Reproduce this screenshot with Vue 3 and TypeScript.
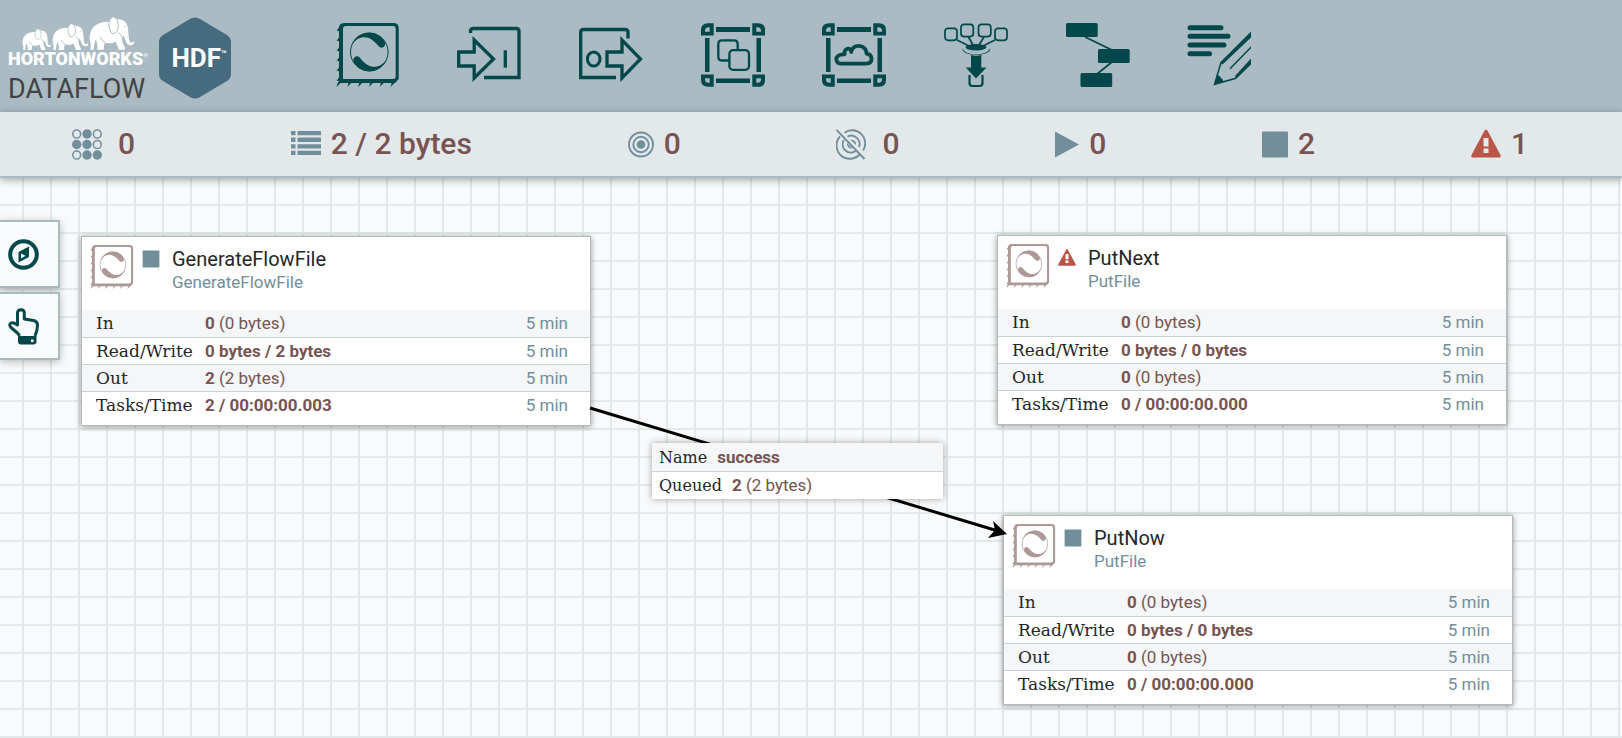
<script setup lang="ts">
interface Stat {
  label: string
  value: string
  extra?: string
}

interface FlowNode {
  id: string
  name: string
  type: string
  state: 'stopped' | 'invalid'
  x: number
  y: number
  stats: Stat[]
}

type Shape = 'processor' | 'input' | 'output' | 'group' | 'remote' | 'funnel' | 'template' | 'label'

const tools: { shape: Shape; title: string }[] = [
  { shape: 'processor', title: 'Processor' },
  { shape: 'input', title: 'Input Port' },
  { shape: 'output', title: 'Output Port' },
  { shape: 'group', title: 'Process Group' },
  { shape: 'remote', title: 'Remote Process Group' },
  { shape: 'funnel', title: 'Funnel' },
  { shape: 'template', title: 'Template' },
  { shape: 'label', title: 'Label' },
]

const counters = [
  { id: 'threads', title: 'Active threads', value: '0', gap: 'wide' },
  { id: 'queued', title: 'Total queued data', value: '2 / 2 bytes', gap: '' },
  { id: 'transmitting', title: 'Transmitting remote groups', value: '0', gap: '' },
  { id: 'silent', title: 'Not transmitting remote groups', value: '0', gap: 'wide' },
  { id: 'running', title: 'Running components', value: '0', gap: '' },
  { id: 'stopped', title: 'Stopped components', value: '2', gap: '' },
  { id: 'invalid', title: 'Invalid components', value: '1', gap: '' },
]

const idle: Stat[] = [
  { label: 'In', value: '0', extra: '(0 bytes)' },
  { label: 'Read/Write', value: '0 bytes / 0 bytes' },
  { label: 'Out', value: '0', extra: '(0 bytes)' },
  { label: 'Tasks/Time', value: '0 / 00:00:00.000' },
]

const nodes: FlowNode[] = [
  {
    id: 'generate', name: 'GenerateFlowFile', type: 'GenerateFlowFile', state: 'stopped', x: 81, y: 58,
    stats: [
      { label: 'In', value: '0', extra: '(0 bytes)' },
      { label: 'Read/Write', value: '0 bytes / 2 bytes' },
      { label: 'Out', value: '2', extra: '(2 bytes)' },
      { label: 'Tasks/Time', value: '2 / 00:00:00.003' },
    ],
  },
  { id: 'next', name: 'PutNext', type: 'PutFile', state: 'invalid', x: 997, y: 57, stats: idle },
  { id: 'now', name: 'PutNow', type: 'PutFile', state: 'stopped', x: 1003, y: 337, stats: idle },
]

const teeth = [0, 1, 2, 3, 4, 5]
const corners = ['', 'translate(64 0) scale(-1 1)', 'translate(0 66) scale(1 -1)', 'translate(64 66) scale(-1 -1)']
</script>

<template>
  <div class="page">
    <svg class="defs" aria-hidden="true">
      <symbol id="processor" viewBox="0 1 64 64">
        <path fill="currentColor" fill-rule="evenodd" d="M3 6Q3 1.200 8 1H58Q62.700 1.200 62.700 6V57L59 61H3ZM7 7V57H57Q59.700 57 59.700 54.500V6.500Q59.700 4 57 4H10Q7 4 7 7Z" />
        <g fill="currentColor">
          <path v-for="t in teeth" :key="'l' + t" :d="`M4 ${4 + t * 10}L0.500 ${9 + t * 10}Q3 ${8 + t * 10} 3.500 ${11 + t * 10}Z`" />
          <path v-for="t in teeth" :key="'b' + t" :d="`M${2 + t * 10.8} 60L${0.5 + t * 10.8} 65L${5.500 + t * 10.8} 60Z`" />
          <path d="M15.500 23C22 7 42 7 49 20C50.500 25 45 27.500 42.500 24C35 14 24 11 15.500 23Z" />
          <path d="M51.100 37C44.600 53 24.600 53 17.600 40C16.100 35 21.600 32.500 24.100 36C31.600 46 42.600 49 51.100 37Z" />
        </g>
        <circle cx="33.300" cy="30" r="18.800" fill="none" stroke="currentColor" />
      </symbol>
      <symbol id="input" viewBox="0 1 64 64">
        <g fill="none" stroke="currentColor" stroke-width="3.300">
          <path d="M1.700 30H17.200V18L36.500 37L17.200 56V44H1.700Z" />
          <path d="M13.500 11V9.500Q13.500 6.500 16.500 6.500H59Q62 6.500 62 9.500V55.500H27" />
          <path d="M48.300 28.300V45.600" />
        </g>
      </symbol>
      <symbol id="output" viewBox="0 1 64 64">
        <g fill="none" stroke="currentColor" stroke-width="3.300">
          <path d="M28 30H43V18L61.500 37L43 56V44H28Z" />
          <path d="M49 16.500V10.500Q49 7.500 46 7.500H4.700Q1.700 7.500 1.700 10.500V55.500H37" />
          <ellipse cx="14.700" cy="37" rx="6.300" ry="7" stroke-width="3" />
        </g>
      </symbol>
      <symbol id="frame" viewBox="0 1 64 64">
        <g fill="currentColor">
          <path v-for="c in corners" :key="c" :transform="c" fill-rule="evenodd" d="M0 13.500V8Q0 1.200 7 1.200H12.700V13.500ZM4 9.700H8.700V5.300H7.500Q4 5.300 4 8.800Z" />
          <path d="M15 5H49V10H15ZM15 56.500H49V61H15ZM4 16H8.500V50H4ZM55.500 16H60V50H55.500Z" />
        </g>
      </symbol>
      <symbol id="group" viewBox="0 1 64 64">
        <use href="#frame" y="1" width="64" height="64" />
        <g fill="none" stroke="currentColor" stroke-width="2.300">
          <path d="M28 38.500H21Q17.300 38.500 17.300 34.800V22Q17.300 18.300 21 18.300H33Q36.700 18.300 36.700 22V28" />
          <rect x="28.400" y="28.200" width="19.600" height="19.600" rx="3.800" />
        </g>
      </symbol>
      <symbol id="remote" viewBox="0 1 64 64">
        <use href="#frame" y="1" width="64" height="64" />
        <path fill="none" stroke="currentColor" stroke-width="3.800" stroke-linejoin="round" d="M20 41.700H44Q49.500 41.400 49.500 37Q49.500 32.500 44.700 31.700C44 25 39 23.300 35 24C32 24.500 30 26.500 29.200 30C29 24.500 21.500 26 22.600 32.300C16.500 32 14.300 34.500 14.300 37.500Q14.500 41.700 20 41.700Z" />
      </symbol>
      <symbol id="funnel" viewBox="0 1 64 64">
        <g fill="none" stroke="currentColor" stroke-width="1.700">
          <rect x="1" y="6.300" width="12" height="12" rx="3" />
          <rect x="17" y="2.300" width="12.300" height="12.300" rx="3" />
          <rect x="34.500" y="2.300" width="12.300" height="12.300" rx="3" />
          <rect x="51" y="6.300" width="12" height="12" rx="3" />
          <path d="M13 18L24 23.500M24.500 15L29 23M40 15L35 23M51 18L40 23.500" />
        </g>
        <g fill="currentColor">
          <ellipse cx="32" cy="25.200" rx="10.500" ry="3.200" />
          <path d="M18.500 26C20 34.500 44 34.500 46 26C46.500 27 46 28.500 45 29.500C40 34 24 34 19.500 29.500Q18 28 18.500 26Z" />
          <path d="M27 33Q32 34.500 37.300 33V45.500H42.500L32 56.500L21.700 45.500H27Z" />
        </g>
        <path fill="none" stroke="currentColor" stroke-width="2.200" d="M25.500 53V61Q25.500 64 28.500 64H35.500Q38.500 64 38.500 61V53" />
      </symbol>
      <symbol id="template" viewBox="0 1 64 64">
        <path fill="none" stroke="currentColor" stroke-width="1.800" d="M19 15L46 28M46 40L31 52" />
        <g fill="currentColor">
          <rect y="1" width="31.700" height="14" rx="1.500" />
          <rect x="32" y="27" width="31.700" height="14" rx="1.500" />
          <rect x="14.500" y="51" width="31.700" height="14" rx="1.500" />
        </g>
      </symbol>
      <symbol id="label" viewBox="0 1 64 64">
        <path stroke="currentColor" stroke-width="5" stroke-linecap="round" d="M3 5.700H34M3 14.300H41M3 23H37M3 31.700H22.500" />
        <g fill="currentColor">
          <path d="M64.500 9V15L35.500 42.500L33 40.500ZM64.500 36V42L49 57L48 54Z" />
          <path d="M27.300 62.300L30.300 53.500Q33 53 33.500 55.500Q36 56.500 36.500 60Z" />
        </g>
        <path fill="none" stroke="currentColor" stroke-width="1.500" d="M64.500 24.700L43 46.700M34 40.500L27.500 62.300L49 56.300" />
      </symbol>

      <symbol id="threads" viewBox="0 0 30 31">
        <g fill="none" stroke="currentColor" stroke-width="1.500">
          <ellipse cx="4.700" cy="5" rx="3.900" ry="4.100" /><ellipse cx="25.300" cy="5" rx="3.900" ry="4.100" />
          <ellipse cx="25.300" cy="15.500" rx="3.900" ry="4.100" /><ellipse cx="4.700" cy="26" rx="3.900" ry="4.100" />
        </g>
        <g fill="currentColor">
          <circle cx="15" cy="5" r="4.700" /><circle cx="4.700" cy="15.500" r="4.700" /><circle cx="15" cy="15.500" r="4.700" />
          <circle cx="15" cy="26" r="4.700" /><circle cx="25.300" cy="26" r="4.700" />
        </g>
      </symbol>
      <symbol id="queued" viewBox="0 0 30 31">
        <path fill="currentColor" d="M0 2H4.500V6.300H0ZM6.500 2H30V6.300H6.500ZM0 8.600H4.500V12.900H0ZM6.500 8.600H30V12.900H6.500ZM0 15.200H4.500V19.500H0ZM6.500 15.200H30V19.500H6.500ZM0 21.800H4.500V26H0ZM6.500 21.800H30V26H6.500Z" />
      </symbol>
      <symbol id="transmitting" viewBox="0 0 26 31">
        <g fill="none" stroke="currentColor" stroke-width="1.900">
          <circle cx="13" cy="15.500" r="12" /><circle cx="13" cy="15.500" r="7.700" />
        </g>
        <circle cx="13" cy="15.500" r="4.300" fill="currentColor" />
      </symbol>
      <symbol id="silent" viewBox="0 0 30 31">
        <g fill="none" stroke="currentColor" stroke-width="1.900">
          <path d="M8.500 3.800A13 13 0 0 1 27 21.500M4 7.500A13 13 0 0 0 23.500 25.500" />
          <path d="M11.500 7.600A8.300 8.300 0 0 1 23 18M7.800 11A8.300 8.300 0 0 0 20 21.800" />
          <path d="M0.500 1L28.500 30" />
        </g>
        <path fill="currentColor" d="M14.500 10.800A4.500 4.500 0 0 1 20 16ZM11 14A4.700 4.700 0 0 0 16.500 19.600Z" />
      </symbol>
      <symbol id="running" viewBox="0 0 24 31"><path fill="currentColor" d="M0 2.500L24 15.500L0 28.500Z" /></symbol>
      <symbol id="stopped" viewBox="0 0 26 31"><rect y="2.500" width="26" height="26" rx="1" fill="currentColor" /></symbol>
      <symbol id="invalid" viewBox="0 0 30 31">
        <path fill="currentColor" fill-rule="evenodd" d="M15 0.500Q16 0.500 16.700 2L29.500 26Q30.500 28.500 28 28.500H2Q-0.500 28.500 0.500 26L13.300 2Q14 0.500 15 0.500ZM12.500 9V17.500H17.500V9ZM12.500 19.500V24H17.500V19.500Z" />
      </symbol>
      <symbol id="elephant" viewBox="0 0 138 98">
        <path fill="#fff" d="M2 68C0 40 14 22 38 16Q52 12 60 15L70 0Q76 0 84 7Q94 5 104 11C116 18 117 32 118 44C119 60 119 70 124 75Q129 78 133 73L137 76Q131 86 122 84C110 81 109 66 104 56Q101 62 98 64Q100 80 108 92V98H90Q84 84 80 74Q64 82 48 76Q44 86 44 98H24Q28 82 20 68Q14 84 14 98H4Q8 84 2 68Z" />
        <path fill="none" stroke="#aabbc3" stroke-width="3" d="M60 15Q58 34 66 46Q76 54 84 42Q92 30 84 7M80 74L70 98M100 62Q96 50 88 46M48 76Q38 70 34 60" />
        <circle cx="108" cy="28" r="2" fill="#aabbc3" />
      </symbol>
    </svg>

    <header class="top">
      <a class="brand" href="#" aria-label="Hortonworks DataFlow">
        <span class="words">
          <span class="herd">
            <svg class="e1"><use href="#elephant" /></svg>
            <svg class="e2"><use href="#elephant" /></svg>
            <svg class="e3"><use href="#elephant" /></svg>
          </span>
          <span class="horton">HORTONWORKS<sup>®</sup></span>
          <span class="dataflow">DATAFLOW</span>
        </span>
        <span class="badge">
          <svg viewBox="0 0 72 82" aria-hidden="true">
            <path fill="#466a7e" d="M31 2Q36 -1 41 2L68 18Q72 20.500 72 25V57Q72 61.500 68 64L41 80Q36 83 31 80L4 64Q0 61.500 0 57V25Q0 20.500 4 18Z" />
          </svg>
          <span class="hdf">HDF<sup>™</sup></span>
        </span>
      </a>
      <nav class="tools" aria-label="Components">
        <button v-for="tool in tools" :key="tool.shape" type="button" :aria-label="tool.title">
          <svg aria-hidden="true"><use :href="'#' + tool.shape" /></svg>
        </button>
      </nav>
    </header>

    <section class="status" aria-label="Flow status">
      <div v-for="c in counters" :key="c.id" class="counter" :class="[c.id, c.gap]" :title="c.title">
        <svg aria-hidden="true"><use :href="'#' + c.id" /></svg>
        <span>{{ c.value }}</span>
      </div>
    </section>

    <main class="canvas">
      <aside class="palettes">
        <button type="button" aria-label="Navigate">
          <svg viewBox="0 0 31 31" aria-hidden="true">
            <circle cx="15.500" cy="15.500" r="13.300" fill="none" stroke="currentColor" stroke-width="4" />
            <path fill="currentColor" fill-rule="evenodd" d="M21 7.500V18L10.500 23.500V13ZM13 14.500V19.500L17.500 16.800Z" />
          </svg>
        </button>
        <button type="button" aria-label="Operate">
          <svg class="hand" viewBox="0 0 31 37" aria-hidden="true">
            <path fill="none" stroke="currentColor" stroke-width="3" stroke-linejoin="round" d="M11.500 28L10 25.500L3 19.500Q0.500 16.500 3 15Q5 14 9.500 17V5Q9.500 1.700 13 1.700Q16.300 1.700 16.300 5V11L25.500 12.500Q29.500 13.500 29.500 17Q29.500 22 27 28" />
            <path fill="currentColor" fill-rule="evenodd" d="M10 28H28.500V33.500Q28.500 36.500 25.500 36.500H13Q10 36.500 10 33.500ZM23 31.500V34H25.500V31.500Z" />
          </svg>
        </button>
      </aside>

      <svg class="wires" aria-hidden="true">
        <path d="M590 230L998 353" stroke="#000" stroke-width="3" />
        <path d="M1007 356L988 360L995 352L993 343Z" />
      </svg>

      <article v-for="n in nodes" :key="n.id" class="node" :style="{ left: n.x + 'px', top: n.y + 'px' }">
        <header>
          <svg class="kind" aria-hidden="true"><use href="#processor" /></svg>
          <svg class="state" :class="n.state" aria-hidden="true"><use :href="'#' + n.state" /></svg>
          <div>
            <h2>{{ n.name }}</h2>
            <p>{{ n.type }}</p>
          </div>
        </header>
        <table>
          <tbody>
            <tr v-for="s in n.stats" :key="s.label">
              <th scope="row">{{ s.label }}</th>
              <td><b>{{ s.value }}</b>{{ s.extra ? ' ' + s.extra : '' }}</td>
              <td class="window">5 min</td>
            </tr>
          </tbody>
        </table>
      </article>

      <dl class="queue">
        <div><dt>Name</dt><dd><b>success</b></dd></div>
        <div><dt>Queued</dt><dd><b>2</b> (2 bytes)</dd></div>
      </dl>
    </main>
  </div>
</template>

<style>
body {
  margin: 0;
}
</style>

<style scoped>
.page {
  display: flex;
  flex-direction: column;
  min-height: 100vh;
  overflow: hidden;
  font-family: Roboto, "Liberation Sans", sans-serif;
  color: #262626;
}
.defs {
  position: absolute;
  width: 0;
  height: 0;
}
button {
  padding: 0;
  border: 0;
  background: none;
  color: #004849;
  cursor: pointer;
}
.top {
  display: flex;
  align-items: flex-start;
  height: 112px;
  background: #aabbc3;
}
.brand {
  display: flex;
  gap: 15px;
  box-sizing: border-box;
  flex: 0 0 307px;
  padding: 17px 0 0 8px;
  color: #434343;
  text-decoration: none;
}
.words {
  display: flex;
  flex-direction: column;
  width: 136px;
}
.herd {
  display: flex;
  align-items: flex-end;
  height: 33px;
  padding-left: 14px;
}
.e1 { width: 30px; height: 21px; }
.e2 { width: 37px; height: 26px; }
.e3 { width: 46px; height: 33px; }
.horton {
  font-size: 18px;
  font-weight: 900;
  line-height: 18px;
  color: #fff;
  white-space: nowrap;
}
.horton sup {
  font-size: 6px;
  font-weight: 400;
  line-height: 6px;
  vertical-align: 7px;
}
.dataflow {
  margin-top: 6px;
  font-size: 27px;
  line-height: 30px;
}
.badge {
  display: grid;
  place-items: center;
  width: 72px;
  height: 82px;
}
.badge > * {
  grid-area: 1 / 1;
}
.badge svg {
  width: 72px;
  height: 82px;
}
.hdf {
  padding-left: 8px;
  font-size: 26px;
  font-weight: 700;
  line-height: 30px;
  color: #fff;
  white-space: nowrap;
}
.hdf sup {
  font-size: 9px;
  line-height: 9px;
  vertical-align: 10px;
}
.tools {
  display: grid;
  grid-template-columns: repeat(8, 1fr);
  width: 60%;
  padding-top: 23px;
}
.tools button {
  display: grid;
  place-items: center;
}
.tools svg {
  width: 64px;
  height: 64px;
}
.status {
  position: relative;
  z-index: 2;
  display: flex;
  align-items: center;
  justify-content: space-between;
  height: 64px;
  padding: 0 94px 0 72px;
  border-bottom: 2px solid #aabbc3;
  background: #e3e8eb;
  box-shadow: 0 2px 8px rgba(0, 0, 0, 0.35);
}
.counter {
  display: flex;
  align-items: center;
  gap: 10px;
  font-size: 30px;
  font-weight: 500;
  line-height: 36px;
  color: #775351;
}
.counter.wide {
  gap: 16px;
}
.counter svg {
  width: 30px;
  height: 31px;
  color: #728e9b;
}
.counter.transmitting svg,
.counter.stopped svg {
  width: 26px;
}
.counter.running svg {
  width: 24px;
}
.counter.invalid svg {
  color: #ba554a;
}
.canvas {
  position: relative;
  flex: 1;
  min-height: 560px;
  background-color: #f9fafb;
  background-image: linear-gradient(to right, #e3e8e9 2px, transparent 2px), linear-gradient(to bottom, #e3e8e9 2px, transparent 2px);
  background-size: 28px 28px;
  background-position: 22px 26px;
}
.palettes {
  position: absolute;
  z-index: 1;
  top: 42px;
  left: 0;
  display: flex;
  flex-direction: column;
  gap: 4px;
}
.palettes button {
  display: flex;
  align-items: center;
  box-sizing: border-box;
  width: 60px;
  height: 68px;
  padding-left: 8px;
  border: 2px solid #aabbc3;
  border-left: 0;
  background: rgba(249, 250, 251, 0.95);
  box-shadow: 0 2px 8px rgba(0, 0, 0, 0.25);
}
.palettes svg {
  width: 31px;
  height: 31px;
}
.palettes .hand {
  height: 37px;
}
.wires {
  position: absolute;
  inset: 0;
  z-index: 1;
  width: 100%;
  height: 100%;
  pointer-events: none;
}
.node {
  position: absolute;
  box-sizing: border-box;
  width: 510px;
  padding-bottom: 7px;
  border: 1px solid #b4b9bb;
  background: #fff;
  box-shadow: 0 1px 6px rgba(0, 0, 0, 0.4);
}
.node header {
  display: flex;
  align-items: flex-start;
  height: 65px;
  padding: 8px 8px 0;
}
.kind {
  width: 44px;
  height: 44px;
  color: #ad9897;
}
.state {
  width: 18px;
  height: 20px;
  margin: 4px 12px 0 8px;
  color: #728e9b;
}
.state.invalid {
  color: #ba554a;
}
.node h2 {
  margin: 2px 0 0;
  font-size: 20px;
  font-weight: 400;
  line-height: 24px;
}
.node p {
  margin: 0;
  font-size: 17px;
  line-height: 22px;
  color: #728e9b;
}
table {
  width: 100%;
  border-collapse: collapse;
  table-layout: fixed;
}
tr {
  height: 27px;
  border-bottom: 1px solid #c7d2d7;
}
tr:last-child {
  border-bottom: 0;
}
tr:nth-child(odd) {
  background: #f4f6f7;
}
th {
  width: 109px;
  padding: 0 0 0 14px;
  text-align: left;
}
th,
dt {
  font-family: "DejaVu Serif", serif;
  font-size: 16px;
  font-weight: 400;
  line-height: 26px;
}
th {
  font-size: 17px;
}
th,
td {
  vertical-align: baseline;
}
td {
  padding: 0;
  font-size: 17px;
  line-height: 26px;
  color: #775351;
}
td.window {
  width: 80px;
  padding-right: 22px;
  text-align: right;
  color: #728e9b;
}
.queue {
  position: absolute;
  z-index: 1;
  top: 265px;
  left: 652px;
  width: 291px;
  margin: 0;
  background: #fff;
  box-shadow: 0 0 7px rgba(0, 0, 0, 0.35);
}
.queue div {
  display: flex;
  align-items: baseline;
  gap: 10px;
  padding: 0 7px;
}
.queue div:first-child {
  padding-top: 1px;
  border-bottom: 1px solid #c7d2d7;
  background: #f4f6f7;
}
.queue dt,
.queue dd {
  margin: 0;
  line-height: 27px;
}
.queue dd {
  font-size: 17px;
  color: #775351;
}
</style>
